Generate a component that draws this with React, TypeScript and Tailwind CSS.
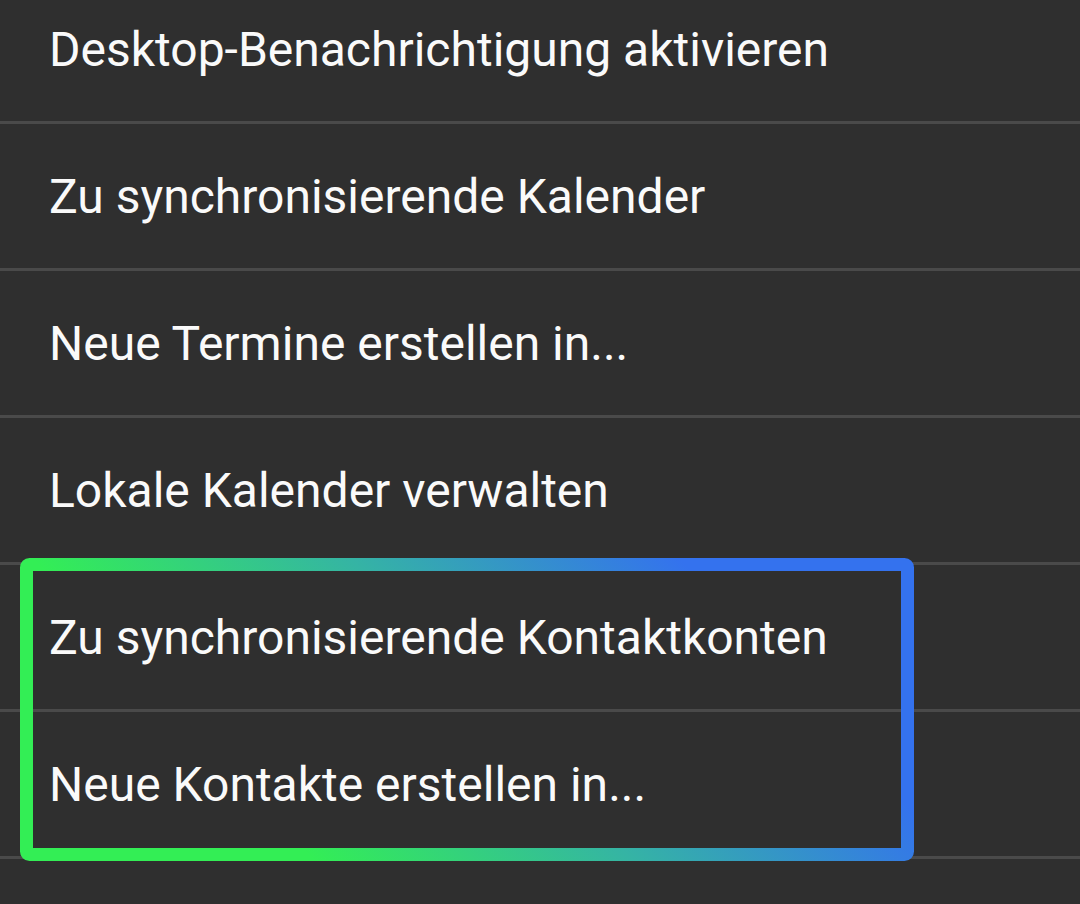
const rows = [
  'Desktop-Benachrichtigung aktivieren',
  'Zu synchronisierende Kalender',
  'Neue Termine erstellen in...',
  'Lokale Kalender verwalten',
];

const highlighted = [
  'Zu synchronisierende Kontaktkonten',
  'Neue Kontakte erstellen in...',
];

function Row({ label }: { label: string }) {
  return (
    <div className="h-[147px] border-b-[3px] border-[#4a4a4a] flex items-center pl-[49px] pt-[2px]">
      <span className="text-[48px] leading-none text-[#fafafa] whitespace-nowrap">{label}</span>
    </div>
  );
}

// gradient outline drawn over the two contact rows
function HighlightFrame() {
  return (
    <svg
      className="absolute left-[20px] top-[-7px] pointer-events-none"
      width="894"
      height="303"
      viewBox="0 0 894 303"
    >
      <defs>
        <linearGradient id="frame" gradientUnits="userSpaceOnUse" x1="132" y1="445" x2="762" y2="-142">
          <stop offset="0.25" stopColor="#33ee55" />
          <stop offset="0.52" stopColor="#35b4a4" />
          <stop offset="0.8" stopColor="#3472ee" />
        </linearGradient>
      </defs>
      <rect x="6.5" y="6.5" width="881" height="290" rx="3" fill="none" stroke="url(#frame)" strokeWidth="13" />
    </svg>
  );
}

export default function App() {
  return (
    <div
      className="w-[1080px] h-[904px] overflow-hidden bg-[#2f2f2f]"
      style={{ fontFamily: 'Roboto, "Noto Sans", sans-serif' }}
    >
      <div className="mt-[-23px]">
        {rows.map((r) => (
          <Row key={r} label={r} />
        ))}
        <div className="relative">
          {highlighted.map((r) => (
            <Row key={r} label={r} />
          ))}
          <HighlightFrame />
        </div>
      </div>
    </div>
  );
}
